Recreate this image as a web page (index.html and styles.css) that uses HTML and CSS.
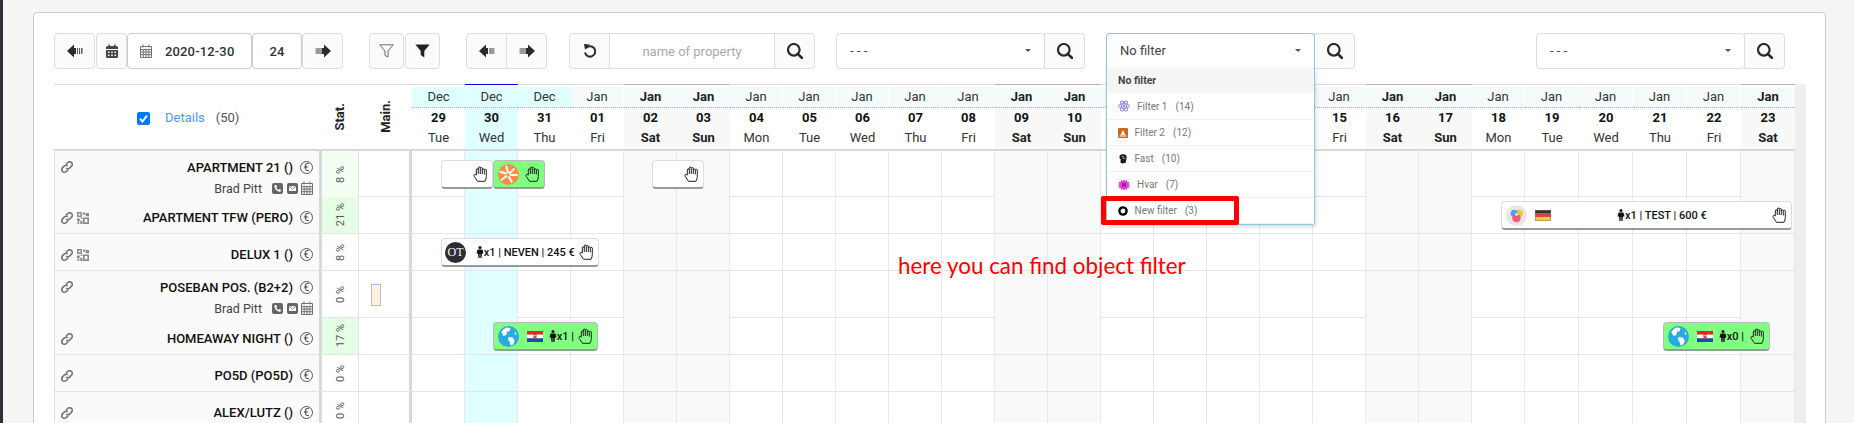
FILE: index.html
```html
<!DOCTYPE html>
<html lang="en">
<head>
<meta charset="utf-8">
<title>Calendar</title>
<link rel="stylesheet" href="styles.css">
</head>
<body>
<svg class="sprite" width="0" height="0" aria-hidden="true">
  <symbol id="arrow-l" viewBox="0 0 16 14"><path d="M0 7 7 0.5V4H9V10H7V13.5Z" fill="#2b2b2b"/><path d="M10 4h1v6h-1zM12 4h1v6h-1zM14 4h1.500v6H14z" fill="#b79a6c"/><path d="M11 4h1v6h-1zM13 4h1v6h-1z" fill="#6fa3d6"/></symbol>
  <symbol id="arrow-r" viewBox="0 0 16 14"><path d="M16 7 9 0.5V4H7V10H9V13.5Z" fill="#2b2b2b"/><path d="M0.500 4H2v6H0.500zM3 4h1v6H3zM5 4h1v6H5z" fill="#b79a6c"/><path d="M2 4h1v6H2zM4 4h1v6H4zM6 4h1v6H6z" fill="#6fa3d6"/></symbol>
  <symbol id="arrow-p" viewBox="0 0 16 14"><path d="M0 7 7 0.5V4H9V10H7V13.5Z" fill="#2b2b2b"/><path d="M10 4h1v6h-1zM12 4h1v6h-1zM14 4h1.500v6H14z" fill="#8b3d9c"/></symbol>
  <symbol id="cal-solid" viewBox="0 0 12 14"><path d="M0 3.500Q0 2 1.500 2H2.500V0.500H4V2H8V0.500H9.500V2H10.500Q12 2 12 3.500V5H0Z" fill="#444"/><path d="M0 6H12V12.500Q12 14 10.500 14H1.500Q0 14 0 12.500ZM2 7.500V9H3.500V7.500ZM5.200 7.500V9H6.800V7.500ZM8.500 7.500V9H10V7.500ZM2 10.500V12H3.500V10.500ZM5.200 10.500V12H6.800V10.500ZM8.500 10.500V12H10V10.500Z" fill="#444" fill-rule="evenodd"/></symbol>
  <symbol id="cal-line" viewBox="0 0 12 14"><path d="M0.500 2.500H11.500V13.500H0.500ZM0.500 5.500H11.500M0.500 8H11.500M0.500 10.700H11.500M3.200 5.500V13.500M6 5.500V13.500M8.800 5.500V13.500M3 0.500V3.500M9 0.500V3.500" fill="none" stroke="#74706a" stroke-width="1"/></symbol>
  <symbol id="funnel-line" viewBox="0 0 15 14"><path d="M0.800 0.800H14.200L9 7V13L6 11.500V7Z" fill="#fff" stroke="#5a6a78" stroke-width="1" stroke-linejoin="round"/></symbol>
  <symbol id="funnel" viewBox="0 0 15 14"><path d="M0.300 0.500H14.700L9.300 7V13.500L5.700 11V7Z" fill="#222"/></symbol>
  <symbol id="reset" viewBox="0 0 14 16"><path d="M3.200 5A5.200 5.200 0 1 1 2 9.500" fill="none" stroke="#2b2b2b" stroke-width="2"/><path d="M1 1 6.800 1.600 2 6.800Z" fill="#2b2b2b"/></symbol>
  <symbol id="search" viewBox="0 0 16 16"><circle cx="6.800" cy="6.800" r="5.800" fill="none" stroke="#2b2b2b" stroke-width="2.200"/><path d="M10.800 10.800 15 15" stroke="#2b2b2b" stroke-width="2.600" stroke-linecap="round"/></symbol>
  <symbol id="link" viewBox="0 0 12 12"><path d="M5 3.200 6.800 1.500A2.400 2.400 0 0 1 10.500 5.200L8.600 7.100A2.400 2.400 0 0 1 5.200 7M7 8.800 5.200 10.500A2.400 2.400 0 0 1 1.500 6.800L3.400 4.900A2.400 2.400 0 0 1 6.800 5" fill="none" stroke="#777" stroke-width="1.700"/></symbol>
  <symbol id="qr" viewBox="0 0 11 11"><path d="M0 0H4.500V4.500H0ZM1.300 1.300V3.200H3.200V1.300ZM5.500 0.500H7.500V2.500H5.500ZM8 1H11V4H8ZM0 6H2.500V8.500H0ZM3 8H5V11H3ZM0.500 9H2V11H0.500ZM5.500 5H11V11H5.500ZM7 6.500V9.500H9.500V6.500ZM3.500 5H5V6.500H3.500Z" fill="#8a8a8a" fill-rule="evenodd"/></symbol>
  <symbol id="phone" viewBox="0 0 11 11"><rect width="11" height="11" rx="2" fill="#666"/><path d="M3 2.200 4.500 2 5 4 4.200 4.800Q5 6.200 6.300 6.900L7.100 6 9 6.700 8.700 8.300Q8.500 9 7.500 8.800 3.200 7.800 2.300 3.300 2.200 2.500 3 2.200Z" fill="#fff"/></symbol>
  <symbol id="mail" viewBox="0 0 11 11"><rect width="11" height="11" rx="2" fill="#666"/><path d="M2 3.200H9V8H2Z" fill="#fff"/><path d="M2 3.500 5.500 6 9 3.500" fill="none" stroke="#666" stroke-width="0.800"/></symbol>
  <symbol id="hand" viewBox="0 0 14 16"><path d="M4.500 15.300 1.200 10.300Q0.400 8.800 1.600 8.300 2.600 8 3.300 9.200V3.800A1 1 0 0 1 5.300 3.800V2A1 1 0 0 1 7.300 2V2.300A1 1 0 0 1 9.300 2.600V3.800A1 1 0 0 1 11.300 3.800 1 1 0 0 1 13.300 5V10.500Q13.300 13 12 15.300ZM5.300 3.800V8M7.300 2.300V8M9.300 3V8M11.300 4V8.500" fill="none" stroke="#222" stroke-width="1"/></symbol>
  <symbol id="person" viewBox="0 0 8 12"><circle cx="4" cy="1.500" r="1.500" fill="#111"/><path d="M1.500 3.500H6.500L7.500 7.500H6L5.500 12H4.300V8H3.700V12H2.500L2 7.500H0.500Z" fill="#111"/></symbol>
  <symbol id="spoke" viewBox="0 0 20 20"><circle cx="10" cy="10" r="10" fill="#fb8b47"/><path d="M9.500 8 8 2.500M11.300 8.500 15 5M12 10.500 18 10.500M10.500 12.500 13 17M8 11.500 3.500 15M7.500 9 2.500 7.500" stroke="#fff" stroke-width="2" stroke-linecap="round"/></symbol>
  <symbol id="globe" viewBox="0 0 20 20"><circle cx="10" cy="10" r="10" fill="#29abe2"/><path d="M8 1.500 12 2 11 5 8.500 5.500 8 8.500 5 9.500 4 7 3 6Q5 2.500 8 1.500ZM10 10.500 14 11 16 14 14.500 17.500 12 18.500 11 15 9.500 13ZM16 5 18 8 16 8Z" fill="#fff"/></symbol>
  <symbol id="blobs" viewBox="0 0 20 20"><circle cx="10" cy="10" r="10" fill="#e6e6e6"/><circle cx="12.500" cy="8" r="3.600" fill="#f6c42e"/><circle cx="7.800" cy="8" r="3.400" fill="#4aa5e8"/><circle cx="10" cy="12.500" r="4" fill="#ea5d77"/><circle cx="10" cy="9" r="1.200" fill="#fff"/></symbol>
  <symbol id="flag-de" viewBox="0 0 16 11"><path d="M0 0H16V3.700H0Z" fill="#333"/><path d="M0 3.700H16V7.300H0Z" fill="#d8453a"/><path d="M0 7.300H16V11H0Z" fill="#f5c63c"/><path d="M0.300 0.300H15.700V10.700H0.300Z" fill="none" stroke="#8a7a50" stroke-width="0.600"/></symbol>
  <symbol id="flag-hr" viewBox="0 0 16 11"><path d="M0 0H16V3.700H0Z" fill="#e8262c"/><path d="M0 3.700H16V7.300H0Z" fill="#fff"/><path d="M0 7.300H16V11H0Z" fill="#2a44a8"/><path d="M6.500 3H9.500V7Q8 8.500 6.500 7Z" fill="#e8262c"/><path d="M7.300 4H8.700V5.300H7.300Z" fill="#fff"/></symbol>
  <symbol id="atom" viewBox="0 0 12 12"><g fill="none" stroke="#8a84f0" stroke-width="0.900"><ellipse cx="6" cy="6" rx="5.500" ry="2.300"/><ellipse cx="6" cy="6" rx="5.500" ry="2.300" transform="rotate(60 6 6)"/><ellipse cx="6" cy="6" rx="5.500" ry="2.300" transform="rotate(120 6 6)"/></g><circle cx="6" cy="6" r="1.200" fill="#8a84f0"/></symbol>
  <symbol id="square" viewBox="0 0 10 10"><rect width="10" height="10" rx="1" fill="#c8691c"/><path d="M5 2 7.500 7H2.500ZM1.500 7.500H8.500V8.500H1.500Z" fill="#fff"/></symbol>
  <symbol id="fist" viewBox="0 0 9 11"><path d="M1 1.500 4 0 8 1 8.500 4 7.500 9.500 3.500 10.500 1.500 9 2 6 0.500 4.500Z" fill="#1a1a1a"/><path d="M3 2.500 5.500 3M4 4.500 7 5" stroke="#fff" stroke-width="0.700"/></symbol>
  <symbol id="gear" viewBox="0 0 12 12"><path d="M6 0 7 2 9 1 9.300 3 11.500 3 10.500 5 12 6 10.500 7 11.500 9 9.300 9 9 11 7 10 6 12 5 10 3 11 2.700 9 0.500 9 1.500 7 0 6 1.500 5 0.500 3 2.700 3 3 1 5 2Z" fill="#e93fe0"/><rect x="4" y="4" width="4" height="4" fill="#a020a0"/></symbol>
  <symbol id="ring" viewBox="0 0 10 10"><circle cx="5" cy="5" r="3.600" fill="none" stroke="#000" stroke-width="2.400"/></symbol>
</svg>

<div class="shell">
  <div class="edge"></div>
  <main class="card">
    <div class="toolbar">
      <button class="btn w41"><svg class="ic16"><use href="#arrow-p"/></svg></button>
      <button class="btn w31 ml1"><svg class="ic12"><use href="#cal-solid"/></svg></button>
      <div class="btn datebox">
        <svg class="ic12"><use href="#cal-line"/></svg>
        <span class="date">2020-12-30</span>
      </div>
      <div class="btn numbox">24</div>
      <button class="btn w41"><svg class="ic16"><use href="#arrow-r"/></svg></button>

      <button class="btn w35 gap26"><svg class="ic15"><use href="#funnel-line"/></svg></button>
      <button class="btn w35 ml1"><svg class="ic15"><use href="#funnel"/></svg></button>

      <button class="btn w41 gap26 left"><svg class="ic16"><use href="#arrow-l"/></svg></button>
      <button class="btn w41 right"><svg class="ic16"><use href="#arrow-r"/></svg></button>

      <button class="btn w41 gap22 left"><svg class="ic14"><use href="#reset"/></svg></button>
      <div class="field placeholder">name of property</div>
      <button class="btn w41 right"><svg class="ics"><use href="#search"/></svg></button>

      <div class="select w209 gap21 left">- - -<span class="caret"></span></div>
      <button class="btn w41 right"><svg class="ics"><use href="#search"/></svg></button>

      <div class="filter gap21">
        <div class="select open">No filter<span class="caret"></span></div>
        <div class="menu">
          <div class="menu-head">No filter</div>
          <div class="menu-item"><svg class="mi"><use href="#atom"/></svg><span class="mt">Filter 1</span><span>(14)</span></div>
          <div class="menu-item"><svg class="mi small"><use href="#square"/></svg><span class="mt">Filter 2</span><span>(12)</span></div>
          <div class="menu-item"><svg class="mi small"><use href="#fist"/></svg><span class="mt">Fast</span><span>(10)</span></div>
          <div class="menu-item"><svg class="mi"><use href="#gear"/></svg><span class="mt">Hvar</span><span>(7)</span></div>
          <div class="menu-item"><svg class="mi small"><use href="#ring"/></svg><span class="mt">New filter</span><span>(3)</span></div>
          <div class="redbox"></div>
        </div>
      </div>
      <button class="btn w41 right"><svg class="ics"><use href="#search"/></svg></button>

      <div class="select w209 gap181 left">- - -<span class="caret"></span></div>
      <button class="btn w41 right"><svg class="ics"><use href="#search"/></svg></button>
    </div>

    <div class="board">
      <div class="table">
        <div class="row head">
          <div class="name-h">
            <span class="check"><svg viewBox="0 0 13 13"><path d="M3 6.800 5.500 9.500 10 3.500" fill="none" stroke="#fff" stroke-width="2"/></svg></span>
            <a class="details">Details</a>
            <span class="count">(50)</span>
          </div>
          <div class="stat-h"><span class="vert">Stat.</span></div>
          <div class="main-h"><span class="vert">Main.</span></div>
          <div class="days">
            <div class="dh dec"><b class="m">Dec</b><b class="n">29</b><b class="w">Tue</b></div>
            <div class="dh dec now"><b class="m">Dec</b><b class="n">30</b><b class="w">Wed</b></div>
            <div class="dh dec"><b class="m">Dec</b><b class="n">31</b><b class="w">Thu</b></div>
            <div class="dh"><b class="m">Jan</b><b class="n">01</b><b class="w">Fri</b></div>
            <div class="dh we"><b class="m">Jan</b><b class="n">02</b><b class="w">Sat</b></div>
            <div class="dh we"><b class="m">Jan</b><b class="n">03</b><b class="w">Sun</b></div>
            <div class="dh"><b class="m">Jan</b><b class="n">04</b><b class="w">Mon</b></div>
            <div class="dh"><b class="m">Jan</b><b class="n">05</b><b class="w">Tue</b></div>
            <div class="dh"><b class="m">Jan</b><b class="n">06</b><b class="w">Wed</b></div>
            <div class="dh"><b class="m">Jan</b><b class="n">07</b><b class="w">Thu</b></div>
            <div class="dh"><b class="m">Jan</b><b class="n">08</b><b class="w">Fri</b></div>
            <div class="dh we"><b class="m">Jan</b><b class="n">09</b><b class="w">Sat</b></div>
            <div class="dh we"><b class="m">Jan</b><b class="n">10</b><b class="w">Sun</b></div>
            <div class="dh"><b class="m">Jan</b><b class="n">11</b><b class="w">Mon</b></div>
            <div class="dh"><b class="m">Jan</b><b class="n">12</b><b class="w">Tue</b></div>
            <div class="dh"><b class="m">Jan</b><b class="n">13</b><b class="w">Wed</b></div>
            <div class="dh"><b class="m">Jan</b><b class="n">14</b><b class="w">Thu</b></div>
            <div class="dh"><b class="m">Jan</b><b class="n">15</b><b class="w">Fri</b></div>
            <div class="dh we"><b class="m">Jan</b><b class="n">16</b><b class="w">Sat</b></div>
            <div class="dh we"><b class="m">Jan</b><b class="n">17</b><b class="w">Sun</b></div>
            <div class="dh"><b class="m">Jan</b><b class="n">18</b><b class="w">Mon</b></div>
            <div class="dh"><b class="m">Jan</b><b class="n">19</b><b class="w">Tue</b></div>
            <div class="dh"><b class="m">Jan</b><b class="n">20</b><b class="w">Wed</b></div>
            <div class="dh"><b class="m">Jan</b><b class="n">21</b><b class="w">Thu</b></div>
            <div class="dh"><b class="m">Jan</b><b class="n">22</b><b class="w">Fri</b></div>
            <div class="dh we"><b class="m">Jan</b><b class="n">23</b><b class="w">Sat</b></div>
          </div>
        </div>

        <div class="row r46">
          <div class="name two">
            <svg class="lk"><use href="#link"/></svg>
            <div class="label">
              <div class="title">APARTMENT 21 ()<span class="euro">€</span></div>
              <div class="owner">Brad Pitt<span class="ct"><svg class="c11"><use href="#phone"/></svg><svg class="c11"><use href="#mail"/></svg><svg class="c12"><use href="#cal-line"/></svg></span></div>
            </div>
          </div>
          <div class="stat g1"><span class="vert">8 %</span></div>
          <div class="main"></div>
          <div class="days"><i></i><i></i><i></i><i></i><i></i><i></i><i></i><i></i><i></i><i></i><i></i><i></i><i></i><i></i><i></i><i></i><i></i><i></i><i></i><i></i><i></i><i></i><i></i><i></i><i></i><i></i></div>
          <div class="bar b-a"><svg class="hand"><use href="#hand"/></svg></div>
          <div class="bar green b-b"><svg class="logo"><use href="#spoke"/></svg><svg class="hand"><use href="#hand"/></svg></div>
          <div class="bar b-c"><svg class="hand"><use href="#hand"/></svg></div>
        </div>

        <div class="row r37">
          <div class="name">
            <svg class="lk"><use href="#link"/></svg><svg class="qr"><use href="#qr"/></svg>
            <div class="label"><div class="title">APARTMENT TFW (PERO)<span class="euro">€</span></div></div>
          </div>
          <div class="stat g2"><span class="vert">21 %</span></div>
          <div class="main"></div>
          <div class="days"><i></i><i></i><i></i><i></i><i></i><i></i><i></i><i></i><i></i><i></i><i></i><i></i><i></i><i></i><i></i><i></i><i></i><i></i><i></i><i></i><i></i><i></i><i></i><i></i><i></i><i></i></div>
          <div class="bar b-d"><svg class="logo"><use href="#blobs"/></svg><svg class="flag"><use href="#flag-de"/></svg><span class="info mid"><svg class="pp"><use href="#person"/></svg>x1 | TEST | 600 €</span><svg class="hand"><use href="#hand"/></svg></div>
        </div>

        <div class="row r37">
          <div class="name">
            <svg class="lk"><use href="#link"/></svg><svg class="qr"><use href="#qr"/></svg>
            <div class="label"><div class="title">DELUX 1 ()<span class="euro">€</span></div></div>
          </div>
          <div class="stat g0"><span class="vert">8 %</span></div>
          <div class="main"></div>
          <div class="days"><i></i><i></i><i></i><i></i><i></i><i></i><i></i><i></i><i></i><i></i><i></i><i></i><i></i><i></i><i></i><i></i><i></i><i></i><i></i><i></i><i></i><i></i><i></i><i></i><i></i><i></i></div>
          <div class="bar b-e"><span class="ot">OT</span><span class="info"><svg class="pp"><use href="#person"/></svg>x1 | NEVEN | 245 €</span><svg class="hand"><use href="#hand"/></svg></div>
        </div>

        <div class="row r47">
          <div class="name two">
            <svg class="lk"><use href="#link"/></svg>
            <div class="label">
              <div class="title">POSEBAN POS. (B2+2)<span class="euro">€</span></div>
              <div class="owner">Brad Pitt<span class="ct"><svg class="c11"><use href="#phone"/></svg><svg class="c11"><use href="#mail"/></svg><svg class="c12"><use href="#cal-line"/></svg></span></div>
            </div>
          </div>
          <div class="stat"><span class="vert">0 %</span></div>
          <div class="main"><span class="maint"></span></div>
          <div class="days"><i></i><i></i><i></i><i></i><i></i><i></i><i></i><i></i><i></i><i></i><i></i><i></i><i></i><i></i><i></i><i></i><i></i><i></i><i></i><i></i><i></i><i></i><i></i><i></i><i></i><i></i></div>
        </div>

        <div class="row r37">
          <div class="name">
            <svg class="lk"><use href="#link"/></svg>
            <div class="label"><div class="title">HOMEAWAY NIGHT ()<span class="euro">€</span></div></div>
          </div>
          <div class="stat g2"><span class="vert">17 %</span></div>
          <div class="main"></div>
          <div class="days"><i></i><i></i><i></i><i></i><i></i><i></i><i></i><i></i><i></i><i></i><i></i><i></i><i></i><i></i><i></i><i></i><i></i><i></i><i></i><i></i><i></i><i></i><i></i><i></i><i></i><i></i></div>
          <div class="bar green b-f"><svg class="logo"><use href="#globe"/></svg><svg class="flag"><use href="#flag-hr"/></svg><span class="info"><svg class="pp"><use href="#person"/></svg>x1 |</span><svg class="hand"><use href="#hand"/></svg></div>
          <div class="bar green b-g"><svg class="logo"><use href="#globe"/></svg><svg class="flag"><use href="#flag-hr"/></svg><span class="info"><svg class="pp"><use href="#person"/></svg>x0 |</span><svg class="hand"><use href="#hand"/></svg></div>
        </div>

        <div class="row r37">
          <div class="name">
            <svg class="lk"><use href="#link"/></svg>
            <div class="label"><div class="title">PO5D (PO5D)<span class="euro">€</span></div></div>
          </div>
          <div class="stat"><span class="vert">0 %</span></div>
          <div class="main"></div>
          <div class="days"><i></i><i></i><i></i><i></i><i></i><i></i><i></i><i></i><i></i><i></i><i></i><i></i><i></i><i></i><i></i><i></i><i></i><i></i><i></i><i></i><i></i><i></i><i></i><i></i><i></i><i></i></div>
        </div>

        <div class="row r37">
          <div class="name">
            <svg class="lk"><use href="#link"/></svg>
            <div class="label"><div class="title">ALEX/LUTZ ()<span class="euro">€</span></div></div>
          </div>
          <div class="stat"><span class="vert">0 %</span></div>
          <div class="main"></div>
          <div class="days"><i></i><i></i><i></i><i></i><i></i><i></i><i></i><i></i><i></i><i></i><i></i><i></i><i></i><i></i><i></i><i></i><i></i><i></i><i></i><i></i><i></i><i></i><i></i><i></i><i></i><i></i></div>
        </div>

        <div class="note">here you can find object filter</div>
      </div>
      <div class="scroll"></div>
    </div>
  </main>
</div>
</body>
</html>
```
FILE: styles.css
```css
* { box-sizing: border-box; }
html, body { margin: 0; height: 423px; overflow: hidden; }
body { background: #f5f5f5; font-family: Roboto, "Liberation Sans", sans-serif; font-size: 13px; color: #222; }
.sprite { position: absolute; }
.shell { display: flex; height: 423px; }
.edge { width: 3px; background: #2d3238; flex: none; }

.card { margin: 12px 0 0 30px; width: 1793px; height: 500px; background: #fff; border: 1px solid #ccc; border-radius: 4px; padding: 20px 20px 0 20px; }

.toolbar { display: flex; height: 36px; margin-bottom: 15px; }
.btn { height: 36px; padding: 0; background: #fbfbfb; border: 1px solid #ddd; border-radius: 4px; display: flex; align-items: center; justify-content: center; flex: none; color: #222; font: 500 13px Roboto, sans-serif; }
.w41 { width: 41px; }
.w31 { width: 31px; }
.w35 { width: 35px; }
.ml1 { margin-left: 1px; }
.gap21 { margin-left: 21px; }
.gap22 { margin-left: 22px; }
.gap26 { margin-left: 26px; }
.gap181 { margin-left: 181px; }
.left { border-radius: 4px 0 0 4px; }
.right { border-radius: 0 4px 4px 0; margin-left: -1px; }
.datebox { width: 125px; background: #fff; border-color: #ccc; justify-content: flex-start; padding-left: 12px; }
.date { margin-left: 13px; font-size: 13px; letter-spacing: 0.15px; color: #333; }
.numbox { width: 50px; background: #fff; border-color: #ccc; font-size: 13px; color: #333; }
.ic16 { width: 16px; height: 14px; }
.ics { width: 16px; height: 16px; }
.ic12 { width: 12px; height: 14px; }
.ic15 { width: 15px; height: 14px; }
.ic14 { width: 14px; height: 16px; }

.field { width: 165px; height: 36px; border: 1px solid #ddd; border-left: 0; background: #fff; display: flex; align-items: center; justify-content: center; flex: none; }
.placeholder { color: #aaa; font-size: 13px; }
.select { position: relative; height: 36px; background: #fff; border: 1px solid #ddd; border-radius: 4px; display: flex; align-items: center; padding-left: 13px; color: #444; flex: none; padding-bottom: 2px; }
.w209 { width: 209px; }
.caret { position: absolute; right: 13px; top: 15px; border: 3.500px solid transparent; border-top-color: #555; border-bottom: 0; }

.filter { position: relative; width: 209px; flex: none; z-index: 5; }
.select.open { width: 100%; border-color: #8fc8dc; border-bottom: 0; border-radius: 4px 4px 0 0; background: #fff; }
.menu { position: absolute; left: 0; top: 35px; width: 100%; background: #fff; border: 1px solid #8fc8dc; border-top: 0; box-shadow: 1px 2px 4px rgba(0,0,0,.15); border-radius: 0 0 3px 3px; }
.menu-head { height: 25px; background: #f5f5f5; display: flex; align-items: center; padding-left: 11px; font-size: 10.500px; font-weight: 700; color: #444; }
.menu-item { height: 26px; border-bottom: 1px solid #f2f2f2; display: flex; align-items: center; padding-left: 11px; font-size: 10px; color: #777; }
.menu-head + .menu-item { height: 27px; }
.menu-item:last-of-type { border-bottom: 0; }
.mi { width: 12px; height: 12px; flex: none; margin-right: 7px; }
.mi.small { width: 10px; height: 10px; margin-right: 6.500px; }
.mt { margin-right: 8px; }
.redbox { position: absolute; left: -6px; bottom: -1px; width: 138px; height: 29px; border: 5px solid #f00; border-radius: 2px; }

.board { display: flex; width: 1752px; }
.table { position: relative; width: 1741px; flex: none; border-top: 1px solid #ddd; }
.scroll { width: 11px; background: #eee; flex: none; height: 400px; }

.row { position: relative; display: grid; grid-template-columns: 265px 40px 53px 1fr; border-bottom: 1px solid #e4e4e4; }
.row.head { height: 66px; border-bottom: 2px solid #d8d8d8; }
.r46 { height: 46px; }
.r47 { height: 47px; }
.r37 { height: 37px; }

.days { display: grid; grid-template-columns: repeat(21, 53px) repeat(5, 54px); }
.days i { border-right: 1px solid #e8e8e8; }
.days i:nth-child(2) { background: #e0ffff; }
.days i:nth-child(5), .days i:nth-child(6), .days i:nth-child(12), .days i:nth-child(13), .days i:nth-child(19), .days i:nth-child(20), .days i:nth-child(26) { background: #f9f9f9; }

.name-h { display: flex; align-items: center; padding-left: 83px; }
.check { width: 13px; height: 13px; margin-top: 2px; background: #007bff; border-radius: 2px; display: block; }
.check svg { display: block; width: 13px; height: 13px; }
.details { margin-left: 15px; color: #4a9bf5; }
.count { margin-left: 11px; color: #555; }
.stat-h, .main-h { display: flex; align-items: center; justify-content: center; font-weight: 700; font-size: 13px; color: #222; }
.stat-h { padding-left: 1px; }
.main-h { padding: 0 0 2px 0; }
.vert { writing-mode: vertical-rl; transform: rotate(180deg); white-space: nowrap; }

.dh { display: flex; flex-direction: column; align-items: center; padding-top: 2px; position: relative; border-top: 1px solid transparent; margin-top: -1px; }
.dh b { font-weight: 400; display: block; width: 100%; text-align: center; }
.dh .m { height: 21px; line-height: 20px; background: #f5fafa; border-bottom: 1px dotted #aaa; border-right: 1px solid #fff; color: #333; }
.dh .n { height: 20px; line-height: 20px; font-weight: 700; color: #111; }
.dh .w { height: 21px; line-height: 20px; color: #333; }
.dec .m { background: #e0ffff; border-right: 0; }
.now { border-top-color: #00f; background: linear-gradient(#fff 3px, #e0ffff 3px); }
.we { border-top-color: #b4b4b4; background: linear-gradient(#fff 3px, #f8f8f8 3px); }
.we .m { border-right: 0; }
.we .m, .we .w { font-weight: 700; color: #222; }

.name { display: flex; align-items: center; background: #fafafa; padding: 5px 6px 0 6px; border-left: 1px solid #e4e4e4; }
.name.two { align-items: flex-start; padding-top: 7px; }
.lk { width: 12px; height: 12px; flex: none; }
.name.two .lk { margin-top: 3px; }
.qr { width: 12px; height: 12px; margin-left: 4px; flex: none; }
.label { margin-left: auto; text-align: right; }
.title { display: flex; justify-content: flex-end; align-items: center; height: 18px; font-weight: 500; font-size: 13px; color: #111; }
.euro { width: 13px; height: 13px; margin-left: 7px; border: 1px solid #555; border-radius: 50%; font-size: 10.500px; font-weight: 400; line-height: 11px; text-align: center; color: #444; flex: none; }
.owner { display: flex; justify-content: flex-end; align-items: center; height: 20px; margin-top: 2px; font-size: 12.500px; color: #444; }
.ct { display: flex; align-items: center; margin-left: 10px; gap: 3.500px; }
.c11 { width: 11px; height: 11px; }
.c12 { width: 12px; height: 14px; }

.stat { border-left: 3px solid #d8d8d8; border-right: 1px solid #e4e4e4; display: flex; align-items: center; justify-content: center; font-size: 11px; color: #555; }
.g1 { background: #f4fff4; }
.g2 { background: #e4ffe4; }
.g0 { background: #fcfffc; }
.main { border-right: 3px solid #d8d8d8; position: relative; }
.maint { display: block; width: 10px; height: 22px; margin: 13px 0 0 12px; background: #fff3e0; border: 1px solid #b8b8f0; }

.bar { position: absolute; height: 29px; top: 9px; background: #fff; border: 1px solid #ddd; border-bottom: 2px solid #999; border-radius: 4px; display: flex; align-items: center; padding: 0 4px; font-weight: 500; color: #111; }
.green { background: #80ff80; border-color: #bbb; border-bottom-color: #999; }
.hand { width: 14px; height: 16px; margin-left: auto; margin-right: 1px; flex: none; }
.logo { width: 21px; height: 21px; flex: none; }
.flag { width: 16px; height: 11px; margin-left: 8px; flex: none; }
.ot { width: 21px; height: 21px; border-radius: 50%; background: #2d2d35; color: #fff; font: 400 12px "Liberation Serif", serif; display: flex; align-items: center; justify-content: center; flex: none; }
.pp { width: 8px; height: 12px; vertical-align: -2px; }
.info { margin-left: 5.700px; white-space: nowrap; font-size: 11px; }
.mid { margin-left: 66px; }
.b-a { left: 387px; width: 52px; }
.b-b { left: 439px; width: 52px; }
.b-c { left: 598px; width: 52px; }
.b-d { left: 1447px; width: 291px; top: 4px; }
.b-e { left: 387px; width: 158px; top: 4px; padding-left: 3px; }
.b-e .info { margin-left: 9.700px; }
.b-f { left: 439px; width: 105px; top: 4px; }
.b-g { left: 1609px; width: 107px; top: 4px; }

.note { position: absolute; left: 844px; top: 167px; font: 400 22.400px Lato, "Open Sans", sans-serif; color: #f00; white-space: nowrap; z-index: 2; }
```
